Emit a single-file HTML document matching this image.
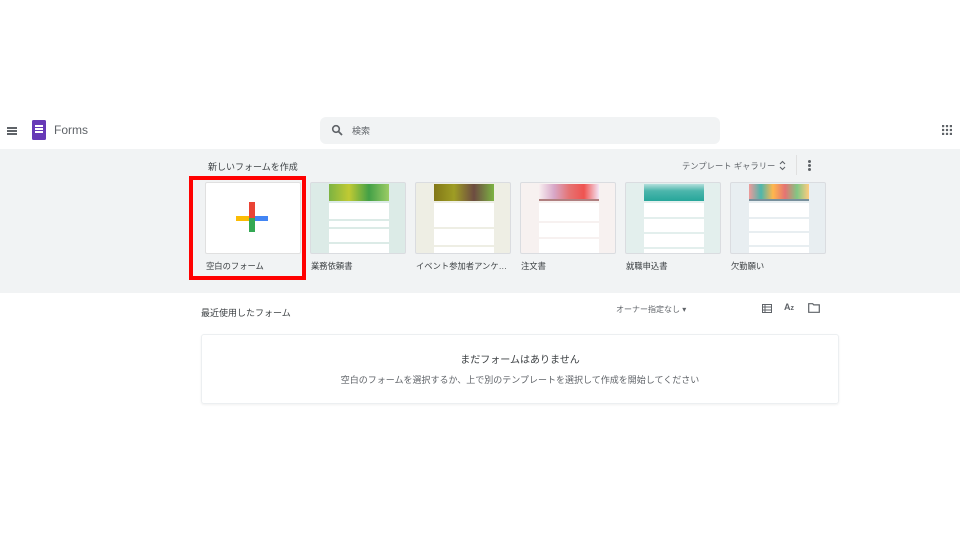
<!DOCTYPE html>
<html><head><meta charset="utf-8"><style>
*{margin:0;padding:0;box-sizing:border-box}
body{width:960px;height:540px;background:#fff;position:relative;overflow:hidden;font-family:"Liberation Sans","Noto Sans CJK JP",sans-serif;color:#3c4043}
.a{position:absolute}
.band{left:0;top:149px;width:960px;height:144px;background:#f1f3f4}
.card{position:absolute;top:182px;width:96px;height:72px;border:1px solid #dadce0;border-radius:2px;overflow:hidden}
.paper{position:absolute;left:18px;width:60px;top:1px;bottom:0}
.hd{height:17px}
.st{background:#fff;margin-top:2px}
.lbl{position:absolute;top:260px;font-size:8.3px;color:#3c4043}
</style></head><body>
<!-- header -->
<div class="a" style="left:7px;top:127px;width:10px;height:1.5px;background:#5f6368;box-shadow:0 3px 0 #5f6368,0 6px 0 #5f6368"></div>
<div class="a" style="left:32px;top:120px;width:14px;height:20px;background:#673ab7;border-radius:1.5px"></div>
<div class="a" style="left:35px;top:125px;width:8px;height:1.5px;background:#fff;box-shadow:0 3px 0 #fff,0 6px 0 #fff"></div>
<div class="a" style="left:54px;top:123px;font-size:12px;color:#5f6368">Forms</div>
<div class="a" style="left:320px;top:117px;width:400px;height:27px;background:#f1f3f4;border-radius:6px"></div>
<svg class="a" style="left:331px;top:124px" width="12" height="12" viewBox="0 0 12 12"><circle cx="5" cy="5" r="3.3" fill="none" stroke="#5f6368" stroke-width="1.6"/><path d="M7.5 7.5L11 11" stroke="#5f6368" stroke-width="1.8"/></svg>
<div class="a" style="left:352px;top:124px;font-size:9px;color:#5f6368">検索</div>
<svg class="a" style="left:942px;top:125px" width="10" height="10" viewBox="0 0 10 10" fill="#5f6368"><rect x="0" y="0" width="2.2" height="2.2"/><rect x="3.9" y="0" width="2.2" height="2.2"/><rect x="7.8" y="0" width="2.2" height="2.2"/><rect x="0" y="3.9" width="2.2" height="2.2"/><rect x="3.9" y="3.9" width="2.2" height="2.2"/><rect x="7.8" y="3.9" width="2.2" height="2.2"/><rect x="0" y="7.8" width="2.2" height="2.2"/><rect x="3.9" y="7.8" width="2.2" height="2.2"/><rect x="7.8" y="7.8" width="2.2" height="2.2"/></svg>
<!-- band -->
<div class="a band"></div>
<div class="a" style="left:208px;top:160px;font-size:9px;color:#3c4043">新しいフォームを作成</div>
<div class="a" style="left:682px;top:160px;font-size:8.3px;color:#5f6368">テンプレート ギャラリー</div>
<svg class="a" style="left:779px;top:160px" width="7" height="11" viewBox="0 0 7 11"><path d="M1 4L3.5 1.5L6 4M1 7L3.5 9.5L6 7" fill="none" stroke="#5f6368" stroke-width="1.1"/></svg>
<div class="a" style="left:796px;top:155px;width:1px;height:20px;background:#e0e0e0"></div>
<div class="a" style="left:808px;top:160px;width:3px;height:3px;background:#5f6368;border-radius:50%;box-shadow:0 4px 0 #5f6368,0 8px 0 #5f6368"></div>
<!-- blank card -->
<div class="card" style="left:205px;background:#fff;border-color:#e0e0e0"></div>
<div class="a" style="left:236px;top:216px;width:32px;height:5px;background:linear-gradient(90deg,#fbbc04 50%,#4285f4 50%)"></div>
<div class="a" style="left:249px;top:202px;width:6px;height:16px;background:#ea4335"></div>
<div class="a" style="left:249px;top:218px;width:6px;height:14px;background:#34a853"></div>
<div class="a" style="left:189px;top:176px;width:117px;height:104px;border:4px solid #f00"></div>
<div class="lbl" style="left:206px">空白のフォーム</div>
<!-- templates -->
<div class="card" style="left:310px;background:#dcebe7"><div class="paper"><div class="hd" style="background:linear-gradient(90deg,#7cb342,#c0ca33,#43a047,#9ccc65)"></div><div class="st" style="height:16px"></div><div class="st" style="height:6px"></div><div class="st" style="height:13px"></div><div class="st" style="height:13px"></div></div></div>
<div class="lbl" style="left:311px">業務依頼書</div>
<div class="card" style="left:415px;background:#eeeee4"><div class="paper"><div class="hd" style="background:linear-gradient(90deg,#827717,#9e9d24,#6d4c41,#7cb342)"></div><div class="st" style="height:24px"></div><div class="st" style="height:16px"></div><div class="st" style="height:10px"></div></div></div>
<div class="lbl" style="left:416px">イベント参加者アンケ…</div>
<div class="card" style="left:520px;background:#f7f1f0"><div class="paper"><div class="hd" style="background:linear-gradient(90deg,#f8eef0,#d8a8c8,#e57373,#ef5350,#f3e5f5);border-bottom:2px solid #b08080"></div><div class="st" style="height:18px"></div><div class="st" style="height:14px"></div><div class="st" style="height:14px"></div></div></div>
<div class="lbl" style="left:521px">注文書</div>
<div class="card" style="left:625px;background:#e3efed"><div class="paper"><div class="hd" style="background:linear-gradient(180deg,#b2dfdb,#4db6ac 40%,#26a69a)"></div><div class="st" style="height:14px"></div><div class="st" style="height:13px"></div><div class="st" style="height:13px"></div><div class="st" style="height:10px"></div></div></div>
<div class="lbl" style="left:626px">就職申込書</div>
<div class="card" style="left:730px;background:#e8eef1"><div class="paper"><div class="hd" style="background:linear-gradient(90deg,#ef9a9a,#4db6ac,#ffb74d,#e57373,#81c784,#ffcc80);border-bottom:2px solid #78909c"></div><div class="st" style="height:14px"></div><div class="st" style="height:12px"></div><div class="st" style="height:12px"></div><div class="st" style="height:10px"></div></div></div>
<div class="lbl" style="left:731px">欠勤願い</div>
<!-- recent -->
<div class="a" style="left:201px;top:306px;font-size:9px;color:#3c4043">最近使用したフォーム</div>
<div class="a" style="left:616px;top:304px;font-size:8px;color:#5f6368">オーナー指定なし ▾</div>
<svg class="a" style="left:762px;top:304px" width="10" height="9" viewBox="0 0 10 9"><rect x="0.5" y="0.5" width="9" height="8" fill="none" stroke="#5f6368"/><path d="M0 3h10M0 6h10M3 0v9" stroke="#5f6368"/></svg>
<div class="a" style="left:784px;top:302px;font-size:9px;color:#5f6368;font-weight:bold">A<span style="font-size:7px">z</span></div>
<svg class="a" style="left:808px;top:303px" width="12" height="10" viewBox="0 0 12 10"><path d="M0.7 0.7h4l1 1.2h5.6v7.4H0.7z" fill="none" stroke="#5f6368" stroke-width="1.2"/></svg>
<div class="a" style="left:201px;top:334px;width:638px;height:70px;border:1px solid #eceff1;border-radius:3px;box-shadow:0 1px 2px rgba(0,0,0,.06)"></div>
<div class="a" style="left:0;width:1040px;top:351px;text-align:center;font-size:10px;color:#3c4043">まだフォームはありません</div>
<div class="a" style="left:0;width:1040px;top:373px;text-align:center;font-size:9px;color:#5f6368">空白のフォームを選択するか、上で別のテンプレートを選択して作成を開始してください</div>
</body></html>
